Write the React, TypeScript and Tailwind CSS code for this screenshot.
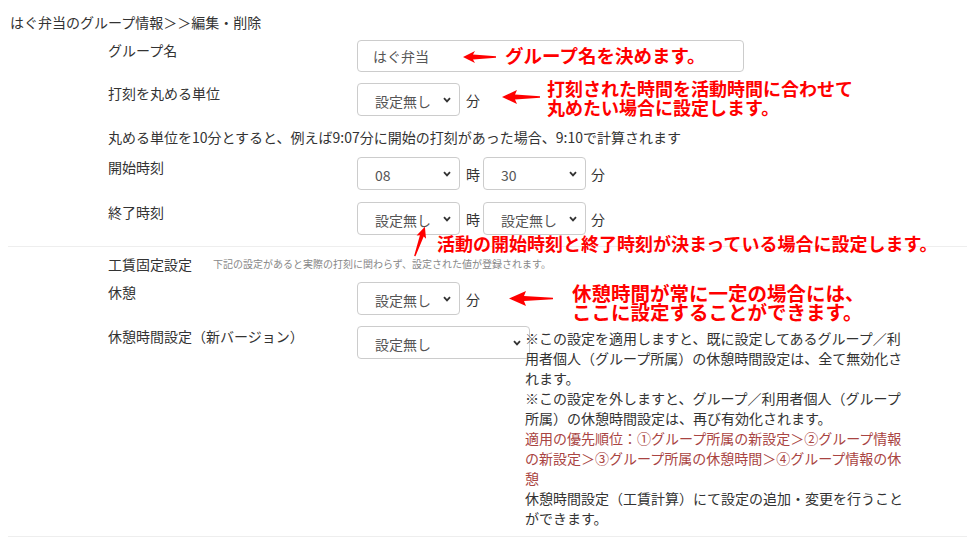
import React from "react";

const LeftArrow = ({ w, h, head }: { w: number; h: number; head: number }) => {
  const c = h / 2;
  return (
    <svg width={w} height={h} viewBox={`0 0 ${w} ${h}`}>
      <path
        d={`M0 ${c} L${head} 0 L${head - 2} ${c - 2.6} L${w} ${c - 0.7} L${w} ${c + 0.7} L${head - 2} ${c + 2.6} L${head} ${h} Z`}
        fill="#ff0000"
      />
    </svg>
  );
};

const UpArrow = () => (
  <svg width="24" height="36" viewBox="0 0 24 36">
    <g transform="rotate(19 12 18)">
      <path d="M12 3 L17 14 L14 12.5 L12.7 34 L11.3 34 L10 12.5 L7 14 Z" fill="#ff0000" />
    </g>
  </svg>
);

const Chevron = () => (
  <svg width="8" height="6" viewBox="0 0 8 6" className="pointer-events-none absolute right-[9px] top-1/2 -translate-y-1/2">
    <path d="M1 1.2 L4 4.4 L7 1.2" fill="none" stroke="#333" strokeWidth="1.8" />
  </svg>
);

const Select = ({ value, width = "w-[103px]" }: { value: string; width?: string }) => (
  <div className={`relative ${width} h-[33px] shrink-0`}>
    <select
      defaultValue={value}
      className="appearance-none w-full h-full border border-[#ccc] rounded-[4px] bg-white pl-[17px] pt-[3px] text-[14px] text-[#555] outline-none"
    >
      <option>{value}</option>
    </select>
    <Chevron />
  </div>
);

const Row = ({ label, children, className = "" }: { label: string; children: React.ReactNode; className?: string }) => (
  <div className={`grid grid-cols-[249px_1fr] ${className}`}>
    <div className="leading-5">{label}</div>
    <div className="flex items-start">{children}</div>
  </div>
);

const Unit = ({ text, className = "" }: { text: string; className?: string }) => (
  <span className={`h-[33px] flex items-center ${className}`}>{text}</span>
);

const Note = ({ children, className = "" }: { children: React.ReactNode; className?: string }) => (
  <div className={`absolute text-[#ff0000] font-bold leading-[19px] whitespace-nowrap ${className}`}>
    {children}
  </div>
);

export default function App() {
  return (
    <div className="relative w-[967px] h-[540px] overflow-hidden bg-white text-[14px] leading-5 text-[#333] font-['Noto_Sans_CJK_JP','Noto_Sans',sans-serif]">
      <div className="pl-2">
        <h1 className="pl-[2px] pt-3 text-[14px] leading-5 font-normal">はぐ弁当のグループ情報＞＞編集・削除</h1>

        <div className="pl-[100px]">
          <Row label="グループ名" className="mt-2">
            <input
              defaultValue="はぐ弁当"
              className="w-[387px] h-[32px] border border-[#ccc] rounded-[4px] pl-[15px] text-[14px] text-[#555] outline-none"
            />
          </Row>

          <Row label="打刻を丸める単位" className="mt-[11px]">
            <Select value="設定無し" />
            <Unit text="分" className="ml-[6px]" />
          </Row>

          <p className="mt-[11px] leading-5">
            丸める単位を10分とすると、例えば9:07分に開始の打刻があった場合、9:10で計算されます
          </p>

          <Row label="開始時刻" className="mt-[10px]">
            <Select value="08" />
            <Unit text="時" className="ml-[6px] mr-[3px]" />
            <Select value="30" />
            <Unit text="分" className="ml-[5px]" />
          </Row>

          <Row label="終了時刻" className="mt-[12px]">
            <Select value="設定無し" />
            <Unit text="時" className="ml-[6px] mr-[3px]" />
            <Select value="設定無し" />
            <Unit text="分" className="ml-[5px]" />
          </Row>
        </div>

        <div className="mt-[11px] border-t border-[#eee]" />

        <div className="pl-[100px]">
          <div className="mt-[7px] flex items-center">
            <span className="text-[14px] leading-5">工賃固定設定</span>
            <span className="ml-[21px] text-[10px] text-[#888] leading-5">
              下記の設定があると実際の打刻に関わらず、設定された値が登録されます。
            </span>
          </div>

          <Row label="休憩" className="mt-2">
            <Select value="設定無し" />
            <Unit text="分" className="ml-[6px]" />
          </Row>

          <Row label="休憩時間設定（新バージョン）" className="mt-[11px]">
            <Select value="設定無し" width="w-[173px]" />
            <div className="relative -ml-[5px] mt-[2px] w-[382px] leading-5">
              <p>※この設定を適用しますと、既に設定してあるグループ／利用者個人（グループ所属）の休憩時間設定は、全て無効化されます。</p>
              <p>※この設定を外しますと、グループ／利用者個人（グループ所属）の休憩時間設定は、再び有効化されます。</p>
              <p className="text-[#a94442]">
                適用の優先順位：①グループ所属の新設定＞②グループ情報の新設定＞③グループ所属の休憩時間＞④グループ情報の休憩
              </p>
              <p>休憩時間設定（工賃計算）にて設定の追加・変更を行うことができます。</p>
            </div>
          </Row>
        </div>

        <div className="mt-[8px] border-t border-[#eee]" />
      </div>

      <div className="absolute left-[463px] top-[51px]">
        <LeftArrow w={33} h={12} head={12} />
      </div>
      <Note className="left-[505px] top-[46px] text-[18.5px]">グループ名を決めます。</Note>

      <div className="absolute left-[502px] top-[90px]">
        <LeftArrow w={38} h={14} head={15} />
      </div>
      <Note className="left-[547px] top-[79px] text-[18px]">
        打刻された時間を活動時間に合わせて
        <br />
        丸めたい場合に設定します。
      </Note>

      <div className="absolute left-[408px] top-[223px]">
        <UpArrow />
      </div>
      <Note className="left-[437px] top-[234px] text-[18px]">活動の開始時刻と終了時刻が決まっている場合に設定します。</Note>

      <div className="absolute left-[509px] top-[291px]">
        <LeftArrow w={44} h={15} head={17} />
      </div>
      <Note className="left-[572px] top-[283px] text-[19.5px]">
        休憩時間が常に一定の場合には、
        <br />
        ここに設定することができます。
      </Note>
    </div>
  );
}
